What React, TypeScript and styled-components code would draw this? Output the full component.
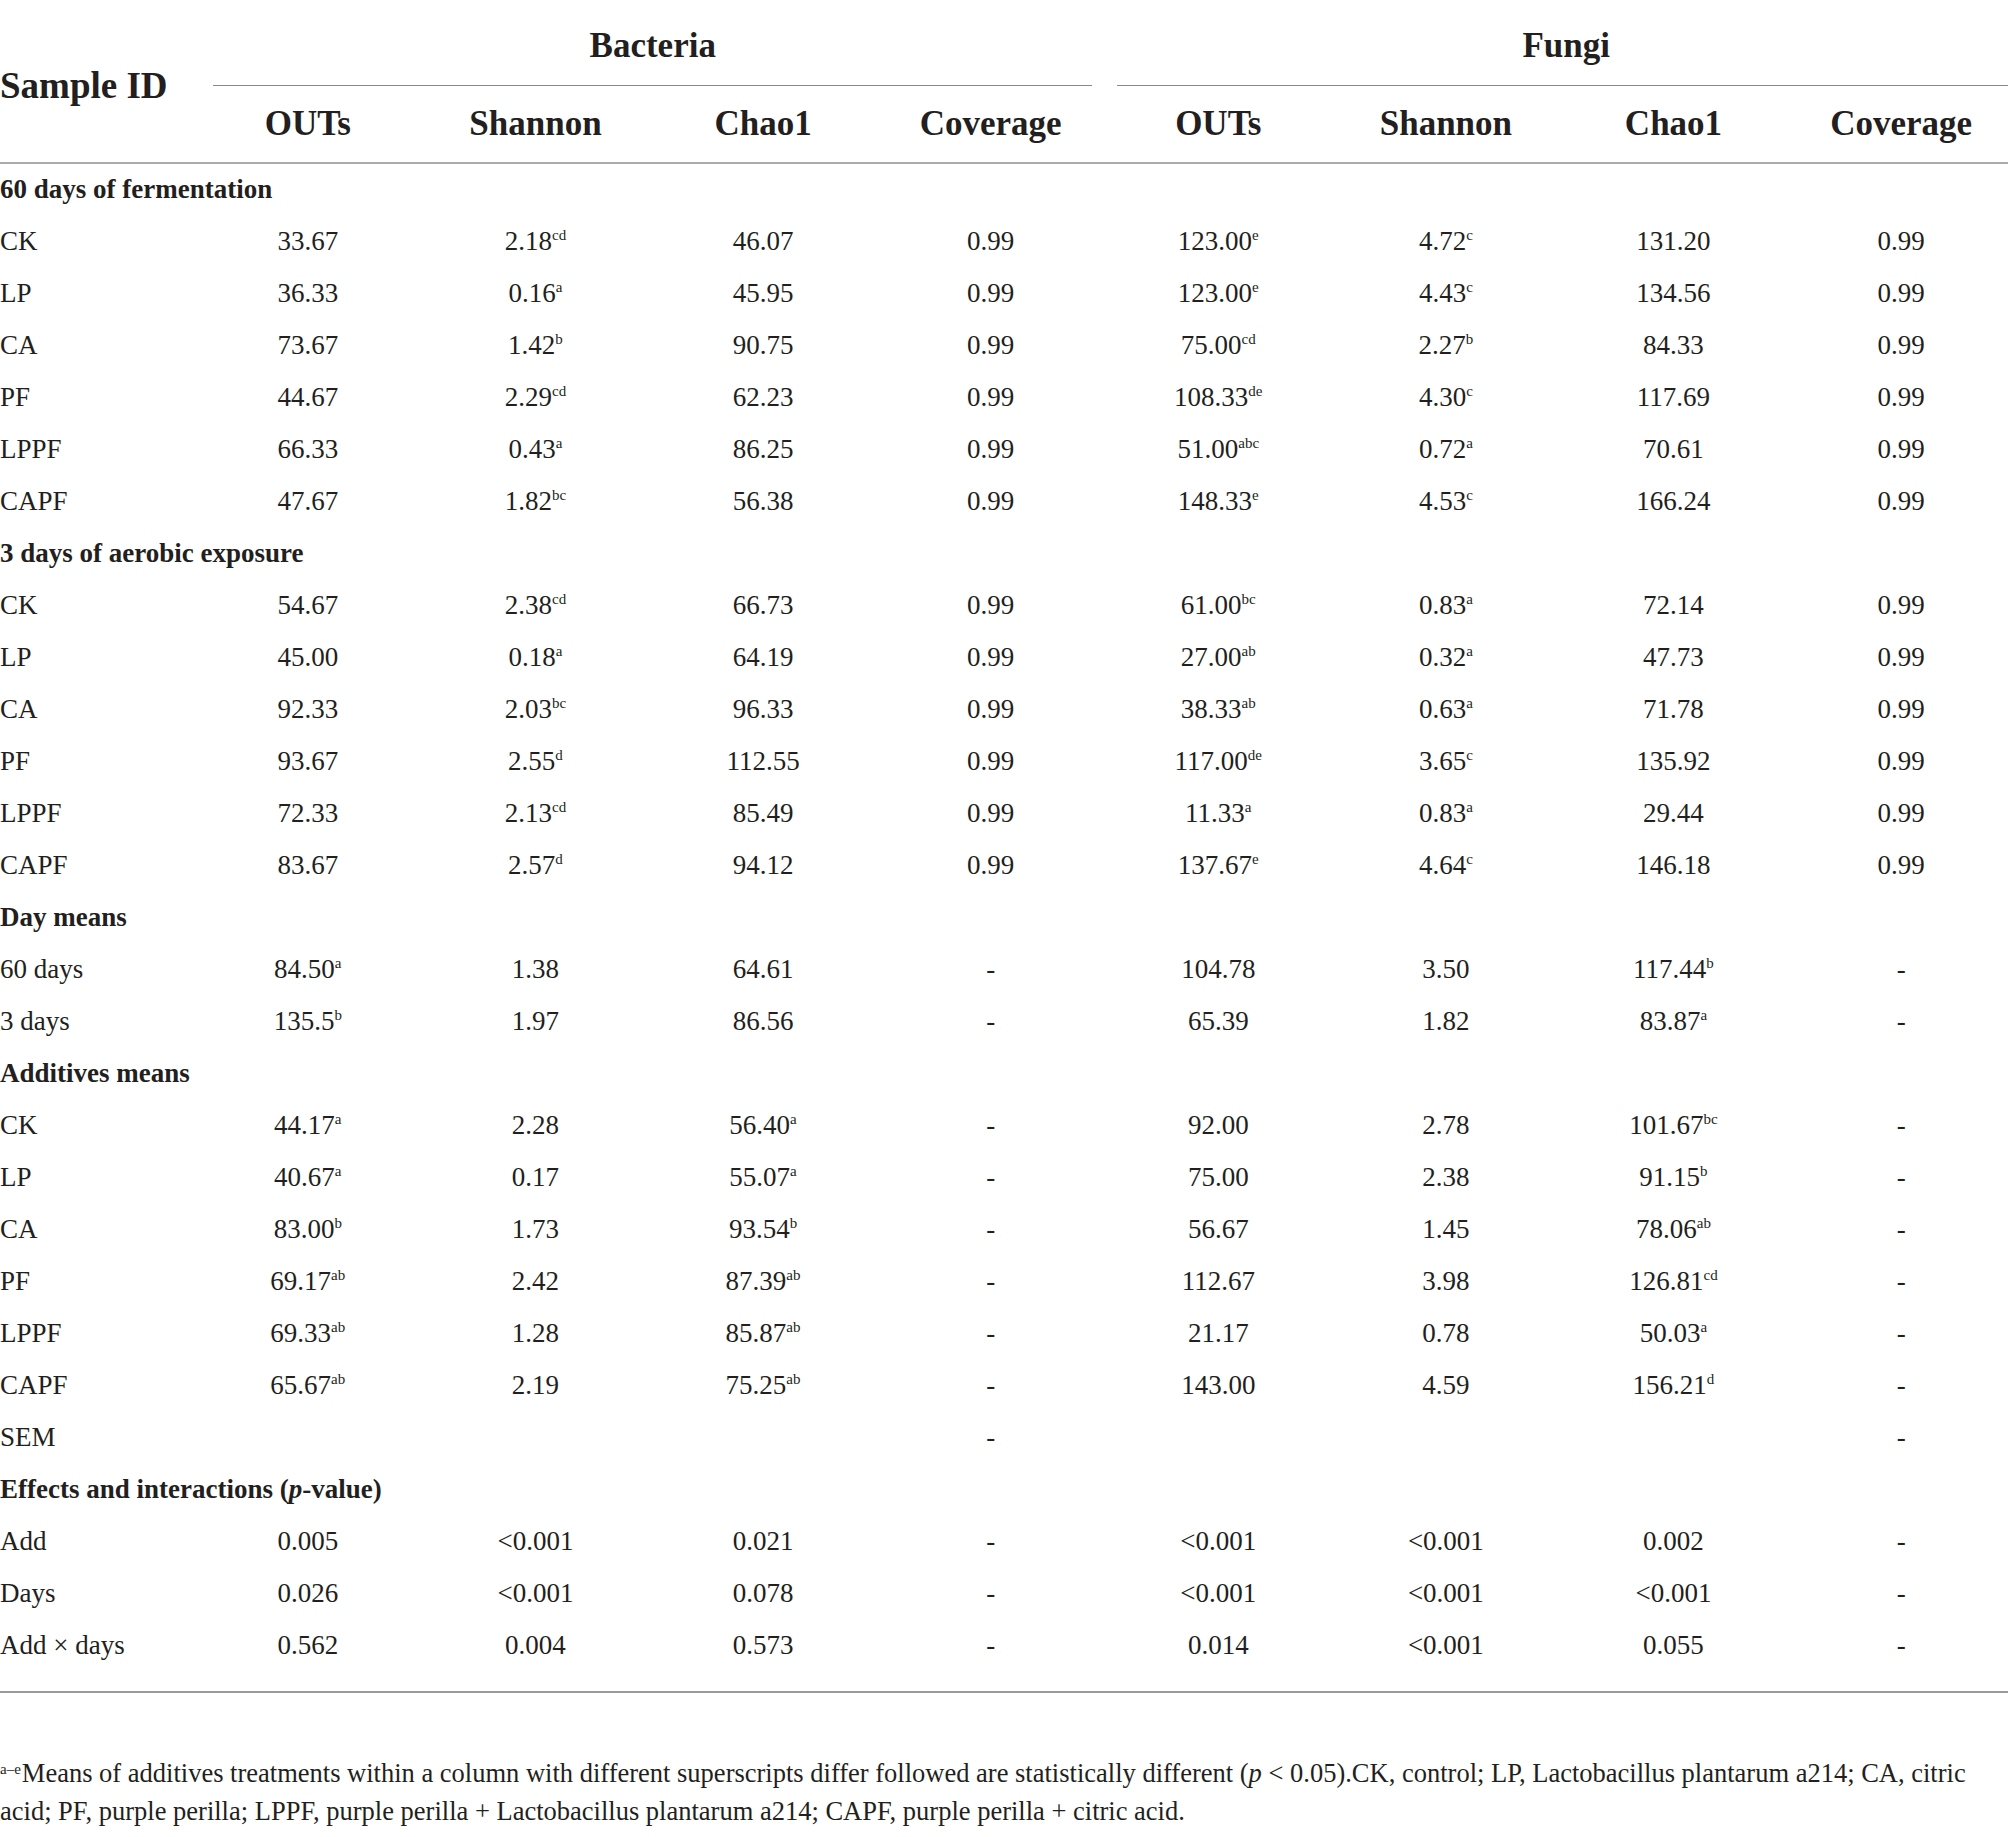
import React from "react";
import styled, { createGlobalStyle } from "styled-components";

const GlobalStyle = createGlobalStyle`
  html, body {
    margin: 0;
    padding: 0;
    background: #ffffff;
  }
  body {
    font-family: "Liberation Serif", "Times New Roman", serif;
    color: #231f20;
  }
`;

const Page = styled.div`
  width: 2008px;
  overflow: hidden;
  background: #ffffff;
`;

const TableFrame = styled.div`
  width: 2008px;
  padding-bottom: 20px;
  border-bottom: 2px solid #9a9a9a;
`;

const Table = styled.table`
  width: 2015px;
  table-layout: fixed;
  border-collapse: collapse;
  border-spacing: 0;
`;

const Col = styled.col<{ $w: number }>`
  width: ${(p) => p.$w}px;
`;

const SampleHead = styled.th`
  text-align: left;
  vertical-align: middle;
  font-size: 37px;
  font-weight: 700;
  line-height: 1;
  padding: 8px 0 0 0;
  white-space: nowrap;
  border-bottom: 2px solid #ababab;
`;

const GroupHead = styled.th<{ $left: number; $right: number }>`
  padding: 0 ${(p) => p.$right}px 0 ${(p) => p.$left}px;
  vertical-align: bottom;
  height: 86px;
`;

const GroupTitle = styled.div`
  height: 80px;
  padding-top: 5px;
  display: flex;
  align-items: center;
  justify-content: center;
  font-size: 35px;
  font-weight: 700;
  line-height: 1;
  border-bottom: 1px solid #8a8a8a;
`;

const SubHead = styled.th`
  height: 74px;
  padding: 0 0 2px 0;
  text-align: center;
  vertical-align: middle;
  font-size: 35px;
  font-weight: 700;
  line-height: 1;
  border-bottom: 2px solid #ababab;
`;

const Row = styled.tr`
  height: 52px;
`;

const SectionCell = styled.td`
  padding: 0;
  font-size: 27px;
  font-weight: 700;
  line-height: 1;
  white-space: nowrap;
  vertical-align: middle;
`;

const LabelCell = styled.td`
  padding: 0;
  font-size: 27px;
  line-height: 1;
  white-space: nowrap;
  vertical-align: middle;
`;

const ValueCell = styled.td`
  padding: 0;
  font-size: 27px;
  line-height: 1;
  text-align: center;
  white-space: nowrap;
  vertical-align: middle;
`;

const Sup = styled.sup`
  font-size: 15px;
  line-height: 0;
  vertical-align: 10px;
`;

const Footnote = styled.p`
  margin: 61px 0 0 0;
  width: 1985px;
  font-size: 26.5px;
  line-height: 38px;
`;

const FootSup = styled.sup`
  font-size: 15px;
  line-height: 1;
  vertical-align: 8px;
  margin-right: 1px;
`;

type RowDef =
  | { kind: "section"; label: React.ReactNode }
  | { kind: "data"; label: string; values: string[] };

const section = (label: React.ReactNode): RowDef => ({ kind: "section", label });
const data = (label: string, values: string): RowDef => ({
  kind: "data",
  label,
  values: values.split(" "),
});

const rows: RowDef[] = [
  section("60 days of fermentation"),
  data("CK", "33.67 2.18^cd 46.07 0.99 123.00^e 4.72^c 131.20 0.99"),
  data("LP", "36.33 0.16^a 45.95 0.99 123.00^e 4.43^c 134.56 0.99"),
  data("CA", "73.67 1.42^b 90.75 0.99 75.00^cd 2.27^b 84.33 0.99"),
  data("PF", "44.67 2.29^cd 62.23 0.99 108.33^de 4.30^c 117.69 0.99"),
  data("LPPF", "66.33 0.43^a 86.25 0.99 51.00^abc 0.72^a 70.61 0.99"),
  data("CAPF", "47.67 1.82^bc 56.38 0.99 148.33^e 4.53^c 166.24 0.99"),
  section("3 days of aerobic exposure"),
  data("CK", "54.67 2.38^cd 66.73 0.99 61.00^bc 0.83^a 72.14 0.99"),
  data("LP", "45.00 0.18^a 64.19 0.99 27.00^ab 0.32^a 47.73 0.99"),
  data("CA", "92.33 2.03^bc 96.33 0.99 38.33^ab 0.63^a 71.78 0.99"),
  data("PF", "93.67 2.55^d 112.55 0.99 117.00^de 3.65^c 135.92 0.99"),
  data("LPPF", "72.33 2.13^cd 85.49 0.99 11.33^a 0.83^a 29.44 0.99"),
  data("CAPF", "83.67 2.57^d 94.12 0.99 137.67^e 4.64^c 146.18 0.99"),
  section("Day means"),
  data("60 days", "84.50^a 1.38 64.61 - 104.78 3.50 117.44^b -"),
  data("3 days", "135.5^b 1.97 86.56 - 65.39 1.82 83.87^a -"),
  section("Additives means"),
  data("CK", "44.17^a 2.28 56.40^a - 92.00 2.78 101.67^bc -"),
  data("LP", "40.67^a 0.17 55.07^a - 75.00 2.38 91.15^b -"),
  data("CA", "83.00^b 1.73 93.54^b - 56.67 1.45 78.06^ab -"),
  data("PF", "69.17^ab 2.42 87.39^ab - 112.67 3.98 126.81^cd -"),
  data("LPPF", "69.33^ab 1.28 85.87^ab - 21.17 0.78 50.03^a -"),
  data("CAPF", "65.67^ab 2.19 75.25^ab - 143.00 4.59 156.21^d -"),
  data("SEM", "_ _ _ - _ _ _ -"),
  section(
    <>
      Effects and interactions (<i>p</i>-value)
    </>
  ),
  data("Add", "0.005 <0.001 0.021 - <0.001 <0.001 0.002 -"),
  data("Days", "0.026 <0.001 0.078 - <0.001 <0.001 <0.001 -"),
  data("Add × days", "0.562 0.004 0.573 - 0.014 <0.001 0.055 -"),
];

const metrics = ["OUTs", "Shannon", "Chao1", "Coverage"];

function Value({ raw }: { raw: string }) {
  if (raw === "_") return null;
  const [num, sup] = raw.split("^");
  return (
    <>
      {num}
      {sup ? <Sup>{sup}</Sup> : null}
    </>
  );
}

export default function App() {
  return (
    <Page>
      <GlobalStyle />
      <TableFrame>
        <Table>
          <colgroup>
            <Col $w={194} />
            {Array.from({ length: 8 }).map((_, i) => (
              <Col key={i} $w={227.6} />
            ))}
          </colgroup>
          <thead>
            <tr>
              <SampleHead rowSpan={2}>Sample ID</SampleHead>
              <GroupHead colSpan={4} $left={19} $right={12}>
                <GroupTitle>Bacteria</GroupTitle>
              </GroupHead>
              <GroupHead colSpan={4} $left={13} $right={0}>
                <GroupTitle>Fungi</GroupTitle>
              </GroupHead>
            </tr>
            <tr>
              {[...metrics, ...metrics].map((m, i) => (
                <SubHead key={i}>{m}</SubHead>
              ))}
            </tr>
          </thead>
          <tbody>
            {rows.map((r, i) =>
              r.kind === "section" ? (
                <Row key={i}>
                  <SectionCell colSpan={9}>{r.label}</SectionCell>
                </Row>
              ) : (
                <Row key={i}>
                  <LabelCell>{r.label}</LabelCell>
                  {r.values.map((v, j) => (
                    <ValueCell key={j}>
                      <Value raw={v} />
                    </ValueCell>
                  ))}
                </Row>
              )
            )}
          </tbody>
        </Table>
      </TableFrame>
      <Footnote>
        <FootSup>a–e</FootSup>Means of additives treatments within a column with
        different superscripts differ followed are statistically different (
        <i>p</i> &lt; 0.05).CK, control; LP, Lactobacillus plantarum a214; CA,
        citric acid; PF, purple perilla; LPPF, purple perilla + Lactobacillus
        plantarum a214; CAPF, purple perilla + citric acid.
      </Footnote>
    </Page>
  );
}
